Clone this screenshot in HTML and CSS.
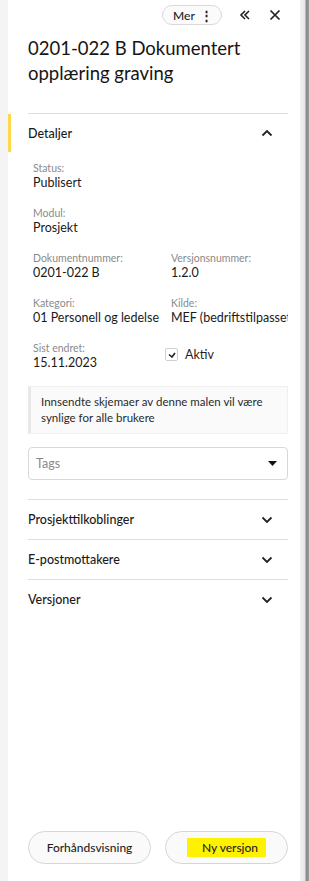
FILE: index.html
```html
<!DOCTYPE html>
<html lang="no">
<head>
  <meta charset="UTF-8">
  <title>Dokumentert opplæring graving</title>
  <link rel="stylesheet" href="styles.css">
</head>
<body>
  <div class="page">
    <div class="gutter"></div>
    <aside class="panel">
      <div class="toolbar">
        <button class="more-btn">Mer <span class="dots">&#8942;</span></button>
        <button class="icon-btn" aria-label="Skjul">
          <svg width="12" height="12" viewBox="0 0 12 12"><path d="M6 2 L2 6 L6 10 M10 2 L6 6 L10 10" fill="none" stroke="#222" stroke-width="1.6"/></svg>
        </button>
        <button class="icon-btn" aria-label="Lukk">
          <svg width="12" height="12" viewBox="0 0 12 12"><path d="M1.5 1.5 L10.5 10.5 M10.5 1.5 L1.5 10.5" fill="none" stroke="#222" stroke-width="1.7"/></svg>
        </button>
      </div>

      <h1 class="title">0201-022 B Dokumentert opplæring graving</h1>

      <div class="section open">
        <div class="section-head">
          <span>Detaljer</span>
          <svg width="12" height="8" viewBox="0 0 12 8"><path d="M1.5 6.5 L6 2 L10.5 6.5" fill="none" stroke="#222" stroke-width="1.8"/></svg>
        </div>
        <div class="details">
          <div class="field full">
            <div class="label">Status:</div>
            <div class="value">Publisert</div>
          </div>
          <div class="field full">
            <div class="label">Modul:</div>
            <div class="value">Prosjekt</div>
          </div>
          <div class="field">
            <div class="label">Dokumentnummer:</div>
            <div class="value">0201-022 B</div>
          </div>
          <div class="field">
            <div class="label">Versjonsnummer:</div>
            <div class="value">1.2.0</div>
          </div>
          <div class="field">
            <div class="label">Kategori:</div>
            <div class="value">01 Personell og ledelse</div>
          </div>
          <div class="field">
            <div class="label">Kilde:</div>
            <div class="value">MEF (bedriftstilpasset)</div>
          </div>
          <div class="field">
            <div class="label">Sist endret:</div>
            <div class="value">15.11.2023</div>
          </div>
          <label class="check">
            <span class="box">
              <svg width="8" height="6" viewBox="0 0 8 6"><path d="M1 2.5 L4 5 L7 1" fill="none" stroke="#222" stroke-width="1.6"/></svg>
            </span>
            Aktiv
          </label>
        </div>
        <div class="notice">Innsendte skjemaer av denne malen vil være synlige for alle brukere</div>
        <div class="select">
          <span>Tags</span>
          <svg width="9" height="5" viewBox="0 0 9 5"><path d="M0 0 H9 L4.5 5 Z" fill="#111"/></svg>
        </div>
      </div>

      <div class="section">
        <div class="section-head">
          <span>Prosjekttilkoblinger</span>
          <svg width="12" height="8" viewBox="0 0 12 8"><path d="M1.5 1.5 L6 6 L10.5 1.5" fill="none" stroke="#222" stroke-width="1.8"/></svg>
        </div>
      </div>
      <div class="section">
        <div class="section-head">
          <span>E-postmottakere</span>
          <svg width="12" height="8" viewBox="0 0 12 8"><path d="M1.5 1.5 L6 6 L10.5 1.5" fill="none" stroke="#222" stroke-width="1.8"/></svg>
        </div>
      </div>
      <div class="section">
        <div class="section-head">
          <span>Versjoner</span>
          <svg width="12" height="8" viewBox="0 0 12 8"><path d="M1.5 1.5 L6 6 L10.5 1.5" fill="none" stroke="#222" stroke-width="1.8"/></svg>
        </div>
      </div>

      <div class="footer">
        <button class="pill">Forhåndsvisning</button>
        <button class="pill"><span class="mark">Ny versjon</span></button>
      </div>
    </aside>
    <div class="edge"></div>
  </div>
</body>
</html>
```

FILE: styles.css
```css
* { box-sizing:border-box; }
body { margin:0; font-family:Lato,"Noto Sans",sans-serif; color:#1f1f1f; background:#f4f4f4; }
.page { display:flex; height:881px; }
.gutter { width:8px; background:#f4f4f4; flex:none; }
.panel { flex:1; background:#fff; display:flex; flex-direction:column; padding:0 12px 0 20px; position:relative; }
.edge { width:9px; flex:none; background:linear-gradient(to right,#f2f2f2 0,#e6e6e6 5px,#8a8a8a 6px,#9a9a9a 9px); }

.toolbar { display:flex; justify-content:flex-end; align-items:center; height:30px; }
button { font-family:inherit; color:#1f1f1f; cursor:pointer; }
.more-btn { height:20px; width:60px; padding:0 0 0 2px; justify-content:center; border:1px solid #d9d9d9; border-radius:10px; background:#fbfbfb; font-size:12px; font-weight:500; display:flex; align-items:center; gap:5px; margin-right:8px; }
.dots { font-size:13px; font-weight:700; }
.icon-btn { width:30px; height:30px; border:0; background:none; display:flex; align-items:center; justify-content:center; padding:0; }
.icon-btn + .icon-btn { margin-right:-2px; }

.title { margin:6px 0 0; font-size:18.5px; font-weight:400; line-height:25px; color:#151515; }

.section { border-top:1px solid #dedede; }
.panel .title + .section { margin-top:27px; }
.section-head { height:39px; display:flex; align-items:center; justify-content:space-between; font-size:12.5px; font-weight:500; padding-right:15px; color:#1a1a1a; position:relative; }
.section.open .section-head { height:38px; }
.section.open .section-head::before { content:""; position:absolute; left:-20px; top:0; bottom:0; width:3px; background:#ffd84a; }

.details { display:grid; grid-template-columns:138px 1fr; row-gap:15px; padding:9px 0 0 5px; }
.field { overflow:hidden; white-space:nowrap; padding-right:10px; }
.field.full { grid-column:1 / -1; }
.label { font-size:10.5px; color:#8a8a8a; line-height:14px; }
.value { font-size:12.5px; line-height:16px; color:#1a1a1a; }
.check { display:flex; align-items:center; gap:7px; font-size:12.5px; padding-top:6px; margin-left:-6px; align-self:start; }
.box { width:13px; height:13px; border:1px solid #cfcfcf; border-radius:2px; display:flex; align-items:center; justify-content:center; background:#fff; }

.notice { margin:15px 0 0; background:#fafafa; border:1px solid #f0f0f0; border-left:3px solid #e8e8e8; padding:7px 6px 7px 10px; font-size:11.5px; line-height:16px; color:#2a2a2a; }
.select { margin:13px 0 19px; height:33px; border:1px solid #d8d8d8; border-radius:4px; display:flex; align-items:center; justify-content:space-between; padding:0 10px 0 7px; font-size:12.5px; color:#8a8a8a; }

.footer { margin-top:auto; display:flex; gap:14px; padding-bottom:17px; }
.pill { flex:1; height:33px; border:1px solid #d6d6d6; border-radius:17px; background:#fafafa; font-size:12px; font-weight:500; }
.mark { background:#fff200; padding:2px 8px 2px 15px; }
```
